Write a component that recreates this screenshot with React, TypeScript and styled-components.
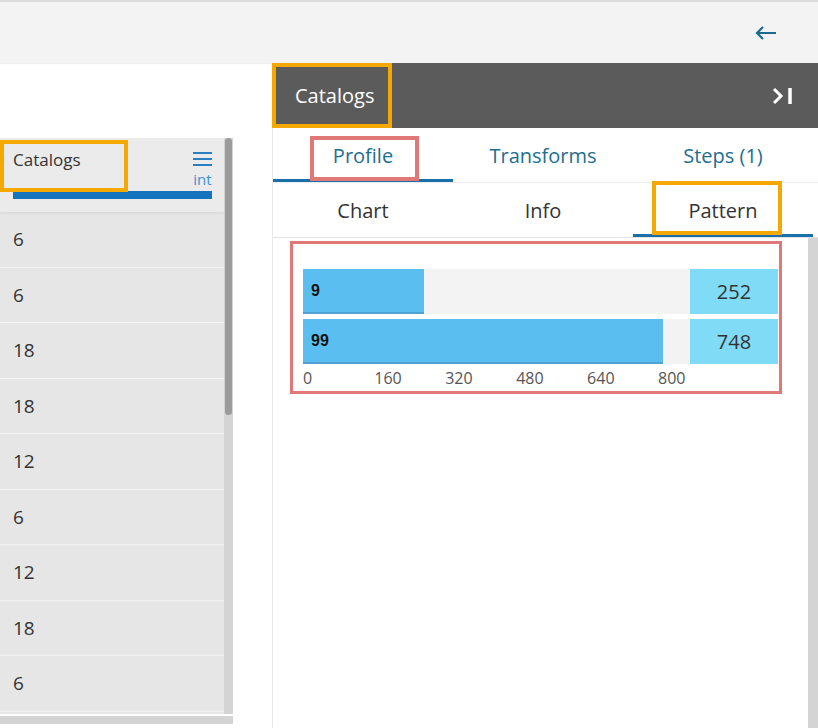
import React from "react";
import styled, { createGlobalStyle } from "styled-components";

const GlobalStyle = createGlobalStyle`
  html, body {
    margin: 0;
    padding: 0;
    background: #fff;
  }
  body {
    font-family: "Open Sans", Lato, sans-serif;
    color: #333;
  }
  * {
    box-sizing: border-box;
  }
`;

const rows = [6, 6, 18, 18, 12, 6, 12, 18, 6];
const bars = [
  { label: "9", count: 252, width: 121 },
  { label: "99", count: 748, width: 360 },
];
const ticks = [0, 160, 320, 480, 640, 800];

const Page = styled.div`
  width: 818px;
  height: 728px;
  overflow: hidden;
  display: flex;
  flex-direction: column;
`;

const TopBar = styled.div`
  height: 63px;
  border-top: 2px solid #dcdcdc;
  background: #f3f3f3;
  box-shadow: 0 1px 1px rgba(0, 0, 0, 0.06);
  display: flex;
  align-items: center;
  justify-content: flex-end;
  padding-right: 41px;
  color: #1d6a8c;
`;

const Body = styled.div`
  flex: 1;
  display: flex;
  min-height: 0;
`;

const LeftSide = styled.div`
  width: 272px;
  padding-top: 75px;
`;

const ListFrame = styled.div`
  width: 233px;
  display: grid;
  grid-template-columns: 224px 9px;
  grid-template-rows: 576px 10px;
`;

const List = styled.div`
  background: #e6e6e6;
  display: flex;
  flex-direction: column;
  overflow: hidden;
`;

const ListHeader = styled.div`
  position: relative;
  height: 74px;
  flex-shrink: 0;
  background: #ebebeb;
  padding: 12px 12px 0 13px;
  display: grid;
  grid-template-columns: 1fr auto;
  grid-template-rows: 41px 8px;
  box-shadow: 0 2px 2px rgba(0, 0, 0, 0.05);
  z-index: 1;
`;

const HeaderTitle = styled.div`
  font-size: 17px;
  color: #333;
  line-height: 20px;
`;

const TypeCell = styled.div`
  display: flex;
  flex-direction: column;
  align-items: center;
  color: #3f92d2;
  font-size: 15px;
  line-height: 16px;
  padding-top: 2px;
  gap: 5px;
`;

const BlueBar = styled.div`
  grid-column: 1 / 3;
  background: #1474be;
`;

const Row = styled.div`
  height: 55.5px;
  flex-shrink: 0;
  border-bottom: 1.5px solid #f4f4f4;
  display: flex;
  align-items: center;
  padding-left: 13px;
  font-size: 19px;
  color: #333;
`;

const VTrack = styled.div`
  background: #d4d4d4;
  padding: 0 1px;
`;

const VThumb = styled.div`
  height: 277px;
  background: #9b9b9b;
  border-radius: 4px;
`;

const HTrack = styled.div`
  grid-column: 1 / 3;
  background: #d4d4d4;
  margin-top: 2px;
`;

const Highlight = styled.div<{ $color: string }>`
  position: absolute;
  border: 4px solid ${(p) => p.$color};
  pointer-events: none;
`;

const RightPanel = styled.div`
  width: 546px;
  display: flex;
  flex-direction: column;
  border-left: 1px solid #e9e9e9;
`;

const PanelHeader = styled.div`
  position: relative;
  height: 65px;
  flex-shrink: 0;
  background: #5b5b5b;
  display: flex;
  align-items: center;
  justify-content: space-between;
  padding: 0 24px 0 22px;
  color: #fff;
  font-size: 20px;
`;

const TabRow = styled.div<{ $border?: boolean }>`
  position: relative;
  height: 55px;
  flex-shrink: 0;
  display: grid;
  grid-template-columns: repeat(3, 180px);
  border-bottom: 1px solid ${(p) => (p.$border ? "#e2e2e2" : "#ececec")};
`;

const Tab = styled.div<{ $active?: boolean; $tone: string }>`
  display: flex;
  align-items: center;
  justify-content: center;
  font-size: 20px;
  color: ${(p) => p.$tone};
  border-bottom: 3px solid ${(p) => (p.$active ? "#1b6fa8" : "transparent")};
  padding-top: 3px;
`;

const Content = styled.div`
  flex: 1;
  display: grid;
  grid-template-columns: 1fr 10px;
`;

const ContentInner = styled.div`
  padding: 3px 0 0 17px;
`;

const ChartBox = styled.div`
  width: 492px;
  height: 153px;
  border: 3px solid #e07878;
  padding: 25px 0 0 10px;
`;

const BarRow = styled.div`
  display: grid;
  grid-template-columns: 387px 88px;
  height: 45px;
  margin-bottom: 5px;
`;

const Track = styled.div`
  background: #f3f3f3;
  display: flex;
`;

const Bar = styled.div`
  background: #5bbef0;
  border-bottom: 2px solid #4fa3d3;
  display: flex;
  align-items: center;
  padding-left: 8px;
  font-family: "Liberation Sans", Arial, sans-serif;
  font-weight: 700;
  font-size: 16px;
  color: #111;
`;

const Count = styled.div`
  background: #80dbf7;
  display: flex;
  align-items: center;
  justify-content: center;
  font-size: 20px;
  color: #333;
`;

const Axis = styled.div`
  position: relative;
  width: 387px;
  height: 20px;
  font-size: 16px;
  color: #555;
  line-height: 18px;
`;

const Tick = styled.span<{ $first?: boolean }>`
  position: absolute;
  top: 0;
  transform: ${(p) => (p.$first ? "none" : "translateX(-50%)")};
`;

const Scroll = styled.div`
  background: #d4d4d4;
`;

const BackArrow = () => (
  <svg width="22" height="16" viewBox="0 0 22 16" fill="none" stroke="currentColor" strokeWidth="2.2">
    <path d="M21 8H2M8 2L2 8l6 6" />
  </svg>
);

const CollapseIcon = () => (
  <svg width="22" height="18" viewBox="0 0 22 18" fill="none" stroke="#fff">
    <path d="M2 2l7 7-7 7" strokeWidth="3" />
    <path d="M18 1v16" strokeWidth="3.5" />
  </svg>
);

const MenuIcon = () => (
  <svg width="19" height="14" viewBox="0 0 19 14" stroke="#2a7fc0" strokeWidth="2">
    <path d="M0 1h19M0 7h19M0 13h19" />
  </svg>
);

const tickLeft = (t: number) => (t === 0 ? 0 : 14 + t * 0.4435);

export default function App() {
  return (
    <Page>
      <GlobalStyle />
      <TopBar>
        <BackArrow />
      </TopBar>
      <Body>
        <LeftSide>
          <ListFrame>
            <List>
              <ListHeader>
                <HeaderTitle>Catalogs</HeaderTitle>
                <TypeCell>
                  <MenuIcon />
                  <span>int</span>
                </TypeCell>
                <BlueBar />
                <Highlight $color="#f5a800" style={{ left: 0, top: 2, width: 128, height: 52 }} />
              </ListHeader>
              {rows.map((v, i) => (
                <Row key={i}>{v}</Row>
              ))}
            </List>
            <VTrack>
              <VThumb />
            </VTrack>
            <HTrack />
          </ListFrame>
        </LeftSide>
        <RightPanel>
          <PanelHeader>
            <span>Catalogs</span>
            <CollapseIcon />
            <Highlight $color="#f5a800" style={{ left: -1, top: 0, width: 120, height: 65 }} />
          </PanelHeader>
          <TabRow>
            <Tab $active $tone="#1e6e8e">Profile</Tab>
            <Tab $tone="#1e6e8e">Transforms</Tab>
            <Tab $tone="#1e6e8e">Steps (1)</Tab>
            <Highlight $color="#e07878" style={{ left: 37, top: 8, width: 109, height: 45 }} />
          </TabRow>
          <TabRow $border>
            <Tab $tone="#333">Chart</Tab>
            <Tab $tone="#333">Info</Tab>
            <Tab $active $tone="#333">Pattern</Tab>
            <Highlight $color="#f5a800" style={{ left: 379, top: -2, width: 130, height: 54 }} />
          </TabRow>
          <Content>
            <ContentInner>
              <ChartBox>
                {bars.map((b) => (
                  <BarRow key={b.label}>
                    <Track>
                      <Bar style={{ width: b.width }}>{b.label}</Bar>
                    </Track>
                    <Count>{b.count}</Count>
                  </BarRow>
                ))}
                <Axis>
                  {ticks.map((t) => (
                    <Tick key={t} $first={t === 0} style={{ left: tickLeft(t) }}>
                      {t}
                    </Tick>
                  ))}
                </Axis>
              </ChartBox>
            </ContentInner>
            <Scroll />
          </Content>
        </RightPanel>
      </Body>
    </Page>
  );
}
